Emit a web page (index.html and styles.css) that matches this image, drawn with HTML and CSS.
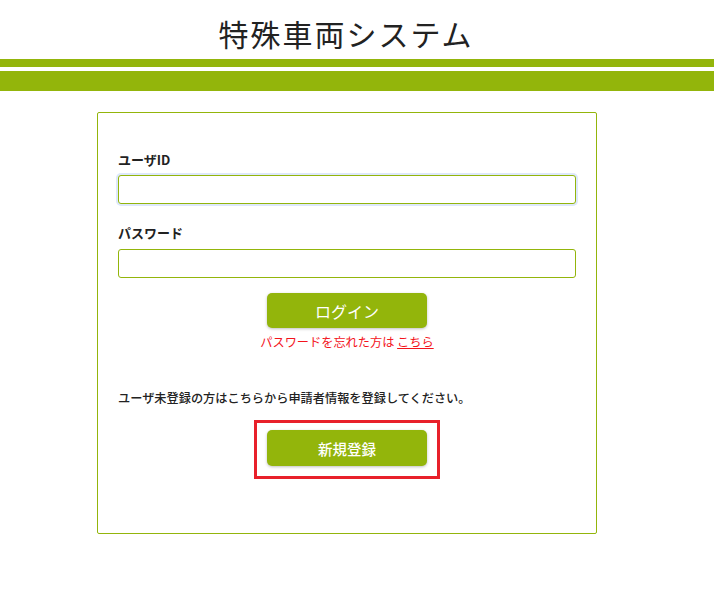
FILE: index.html
```
<!DOCTYPE html>
<html lang="ja">
<head>
<meta charset="utf-8">
<title>特殊車両システム</title>
<link rel="stylesheet" href="styles.css">
</head>
<body>
<header class="header">
  <h1 class="title">特殊車両システム</h1>
  <div class="stripe stripe-thin"></div>
  <div class="stripe stripe-thick"></div>
</header>
<main class="main">
  <section class="card">
    <label class="label" for="uid">ユーザID</label>
    <input class="input input-focus" id="uid" type="text">
    <label class="label label-pw" for="pw">パスワード</label>
    <input class="input" id="pw" type="password">
    <div class="center">
      <button class="btn btn-login">ログイン</button>
      <p class="forgot">パスワードを忘れた方は <a class="forgot-link" href="#">こちら</a></p>
    </div>
    <p class="notice">ユーザ未登録の方はこちらから申請者情報を登録してください。</p>
    <div class="center">
      <div class="highlight">
        <button class="btn btn-register">新規登録</button>
      </div>
    </div>
  </section>
</main>
</body>
</html>
```
FILE: styles.css
```
* { box-sizing: border-box; }
html, body { margin: 0; padding: 0; background: #fff; }
body {
  font-family: "Noto Sans CJK JP", "Noto Sans", sans-serif;
  color: #222;
  width: 714px;
}
.header { padding-top: 14px; }
.title {
  margin: 0;
  text-align: center;
  font-size: 30px;
  font-weight: 400;
  line-height: 38px;
  letter-spacing: 2px;
  color: #222;
  padding-right: 22px;
}
.stripe { background: #93b50b; }
.stripe-thin { height: 8px; margin-top: 7px; }
.stripe-thick { height: 20px; margin-top: 4px; }
.main { display: flex; justify-content: center; padding-top: 21px; }
.card {
  width: 500px;
  height: 422px;
  margin-left: -20px;
  border: 1px solid #93b50b;
  border-radius: 2px;
  padding: 38px 20px 0 20px;
  display: flex;
  flex-direction: column;
}
.label {
  font-size: 13px;
  font-weight: 700;
  line-height: 18px;
  color: #222;
  margin-bottom: 6px;
}
.label-pw { margin-top: 20px; margin-bottom: 7px; }
.input {
  width: 458px;
  height: 29px;
  border: 1px solid #93b50b;
  border-radius: 3px;
  outline: none;
  padding: 0 10px;
  font-size: 14px;
  background: #fff;
}
.input-focus { box-shadow: 0 0 0 2px #dde8fb; }
.center { display: flex; flex-direction: column; align-items: center; }
.btn {
  width: 160px;
  border: none;
  border-radius: 5px;
  background: #93b50b;
  color: #fff;
  font-family: inherit;
  box-shadow: 0 1px 3px rgba(0,0,0,0.25);
}
.btn-login {
  height: 35px;
  margin-top: 15px;
  font-size: 16px;
}
.forgot {
  margin: 5px 0 0;
  font-size: 12.2px;
  line-height: 18px;
  color: #f3141c;
}
.forgot-link { color: #f3141c; text-decoration: underline; }
.notice {
  margin: 38px 0 0;
  font-size: 12.2px;
  font-weight: 500;
  line-height: 18px;
  color: #222;
}
.highlight {
  margin-top: 13px;
  border: 3px solid #e8202a;
  padding: 7px 10px 10px;
}
.btn-register {
  height: 36px;
  font-size: 14.5px;
  font-weight: 500;
}
```
